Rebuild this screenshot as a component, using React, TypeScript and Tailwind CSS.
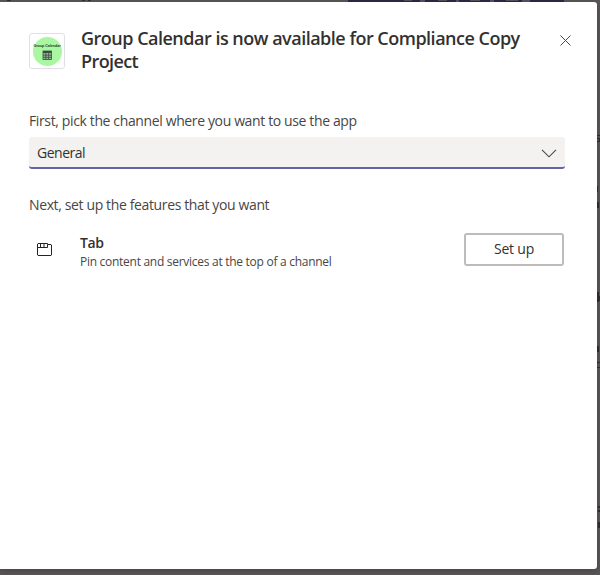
import type { ReactNode } from "react";

function AppLogo() {
  return (
    <div className="flex size-9 shrink-0 items-center justify-center rounded-[3px] border border-[#e1dfe6] bg-white">
      <div className="flex size-[29px] flex-col items-center rounded-full bg-[#a9f7a1] pt-[7px]">
        <span className="whitespace-nowrap font-['Liberation_Sans',sans-serif] text-[3.6px] leading-[5px] font-bold text-[#1c3a1c]">
          Group Calendar
        </span>
        <svg className="mt-px size-[10px]" viewBox="0 0 10 10" fill="none">
          <rect x="1" y="1" width="8.5" height="8.5" fill="#8fb992" stroke="#3f4a45" strokeWidth="0.8" />
          <path d="M1 2h8.5" stroke="#3f4a45" strokeWidth="2" />
          <path d="M1 5.2h8.5M1 7.3h8.5M3.8 2v7.5M6.7 2v7.5" stroke="#3f4a45" strokeWidth="0.8" />
        </svg>
      </div>
    </div>
  );
}

function Label({ children }: { children: ReactNode }) {
  return <p className="whitespace-nowrap text-[14px] leading-5 tracking-[-0.37px] text-[#484644]">{children}</p>;
}

/** Slivers of the dimmed page that show past the dialog's edges. */
function DimmedPage() {
  return (
    <svg className="absolute inset-0 h-[575px] w-[600px]" viewBox="0 0 600 575" fill="none">
      <path d="M348 0h216v2h-216z" fill="#2b2943" />
      <path d="M404 0h8v1h-8zM420 0h5v2h-5zM438 0h9v1h-9zM456 0h3v2h-3zM470 0h10v1h-10zM490 0h4v2h-4zM506 0h12v1h-12zM522 0h8v2h-8z" fill="#555260" />
      <path d="M7 0h4v1h-4zM82 0h3v1h-3zM88 0h3v1h-3z" fill="#2f2d2e" />
      <path d="M597 135h3v1h-3zM597 138h3v1h-3zM599 139h1v2h-1zM597 141h3v1h-3zM597 186h1v6h-1zM597 202h2v6h-2zM597 292h2v10h-2zM599 296h1v5h-1zM597 346h2v6h-2zM597 362h3v1h-3zM597 367h3v1h-3zM598 506h2v2h-2zM598 510h2v2h-2zM598 522h2v6h-2z" fill="#302e2f" />
    </svg>
  );
}

export default function App() {
  return (
    <div className="relative h-[575px] w-[600px] overflow-hidden bg-[#585657] pt-[2px] font-['Open_Sans','Noto_Sans',sans-serif]">
      <DimmedPage />
      <div className="relative flex h-[567px] w-[597px] flex-col rounded-r-[3px] bg-white pr-8 pl-[29px] shadow-[0_2px_6px_rgba(0,0,0,0.2)]">
        <header className="flex pt-[25px]">
          <div className="pt-[6px]">
            <AppLogo />
          </div>
          <h1 className="ml-4 w-[460px] shrink-0 whitespace-nowrap text-[18px] leading-[23px] font-semibold tracking-[-0.5px] text-[#323130]">
            Group Calendar is now available for Compliance Copy
            <br />
            <span className="tracking-[-0.6px]">Project</span>
          </h1>
          <button className="mt-2 ml-[19px] size-[11px] shrink-0" aria-label="Close">
            <svg viewBox="0 0 11 11" fill="none" stroke="#484644">
              <path d="M0.5 0.5l10 10M10.5 0.5l-10 10" />
            </svg>
          </button>
        </header>
        <div className="mt-[38px]">
          <Label>First, pick the channel where you want to use the app</Label>
        </div>
        <div className="mt-[6px] flex h-8 w-[536px] items-center justify-between rounded-[3px] border-b-2 border-[#6264a7] bg-[#f3f2f1] pr-2 pl-2 text-[14px] tracking-[-0.5px] text-[#323130]">
          <span>General</span>
          <svg className="mt-[2px] h-[9px] w-4" viewBox="0 0 16 9" fill="none" stroke="#484644" strokeWidth="1.1">
            <path d="M1 0.8l7 7 7-7" />
          </svg>
        </div>
        <div className="mt-[26px]">
          <Label>Next, set up the features that you want</Label>
        </div>
        <div className="mt-[18px] flex w-[535px] items-start">
          <svg className="mt-[10px] ml-2 h-[13px] w-[15px] shrink-0" viewBox="0 0 15 13" fill="none" stroke="#252423">
            <path d="M1 0.5h9.5v1h3.5l0.5 0.5v10l-0.5 0.5h-13l-0.5-0.5v-11zM0.5 4.5h10v-3M3.5 0.5v4M7 0.5v4" />
          </svg>
          <div className="ml-[28px] whitespace-nowrap">
            <h2 className="text-[14px] leading-5 font-semibold tracking-[-0.4px] text-[#323130]">Tab</h2>
            <p className="text-[12px] leading-[17px] tracking-[-0.28px] text-[#484644]">Pin content and services at the top of a channel</p>
          </div>
          <button className="ml-auto h-[33px] w-[100px] rounded-[3px] border-2 border-[#bdbcbb] pb-[2px] text-[14px] tracking-[-0.2px] text-[#323130]">
            Set up
          </button>
        </div>
      </div>
    </div>
  );
}
